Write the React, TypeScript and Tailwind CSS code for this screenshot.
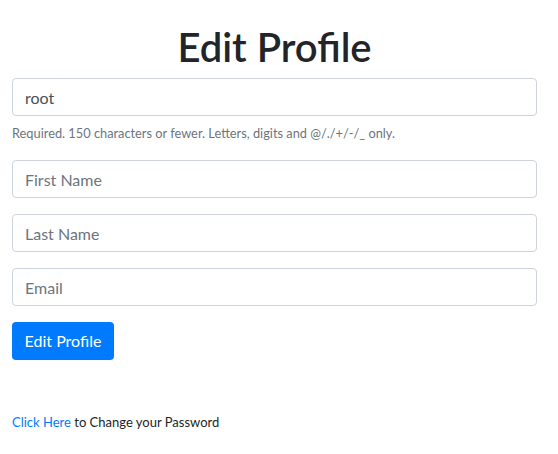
import React from 'react'

export default function App() {
  return (
    <div className="min-h-screen bg-white font-['Lato',sans-serif] text-[#212529]">
      <div className="pl-[12px] pr-[21px] pt-[23px]">
        <h1 className="text-center text-[40px] font-semibold leading-[48px] mb-[7px]">Edit Profile</h1>
        <form onSubmit={(e) => e.preventDefault()}>
          <div className="mb-[17px]">
            <input
              type="text"
              defaultValue="root"
              className="block w-full h-[38px] px-[12px] text-[16px] text-[#495057] border border-[#ced4da] rounded-[4px] outline-none"
            />
            <small className="block mt-[8px] text-[12.8px] leading-[19px] text-[#6c757d]">
              Required. 150 characters or fewer. Letters, digits and @/./+/-/_ only.
            </small>
          </div>
          <div className="mb-[16px]">
            <input
              type="text"
              placeholder="First Name"
              className="block w-full h-[38px] px-[12px] text-[16px] text-[#495057] placeholder:text-[#6c757d] border border-[#ced4da] rounded-[4px] outline-none"
            />
          </div>
          <div className="mb-[16px]">
            <input
              type="text"
              placeholder="Last Name"
              className="block w-full h-[38px] px-[12px] text-[16px] text-[#495057] placeholder:text-[#6c757d] border border-[#ced4da] rounded-[4px] outline-none"
            />
          </div>
          <div className="mb-[16px]">
            <input
              type="email"
              placeholder="Email"
              className="block w-full h-[38px] px-[12px] text-[16px] text-[#495057] placeholder:text-[#6c757d] border border-[#ced4da] rounded-[4px] outline-none"
            />
          </div>
          <button
            type="submit"
            className="h-[38px] w-[102px] rounded-[4px] bg-[#007bff] text-[16px] text-white"
          >
            Edit Profile
          </button>
        </form>
        <p className="mt-[52px] text-[13px] leading-[21px]">
          <a href="#" className="text-[#007bff]">Click Here</a> to Change your Password
        </p>
      </div>
    </div>
  )
}
